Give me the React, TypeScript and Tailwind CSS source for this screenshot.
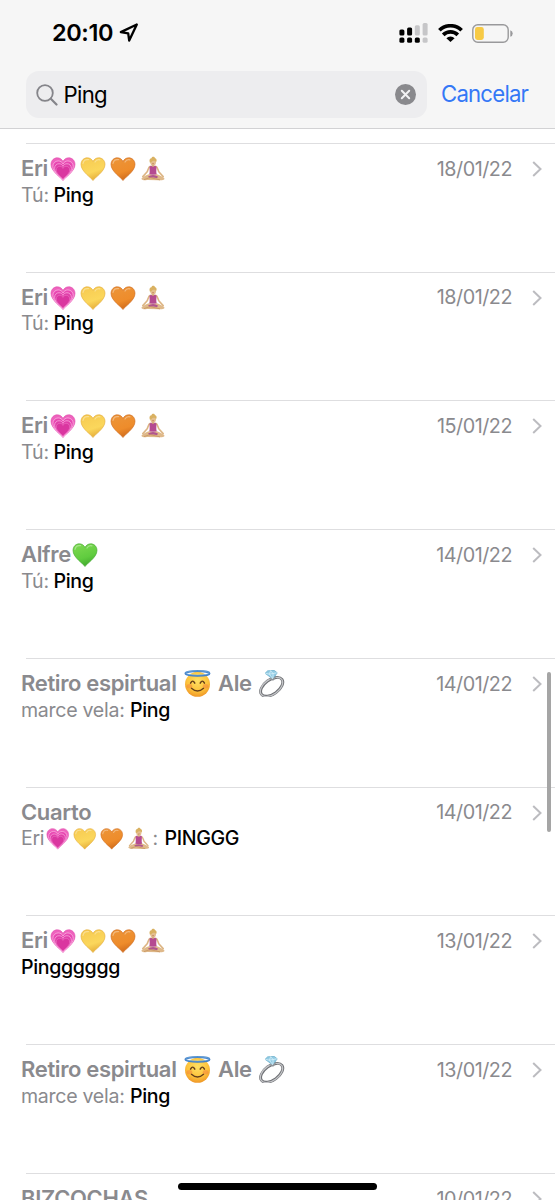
import React, { useId } from 'react';

type EmojiProps = { className: string };

const HEART = 'M13 24.5C11.9 22.2 1 15.6 1 8.5C1 4.4 3.9 1.8 7.3 1.8C9.9 1.8 12 3.3 13 5.5C14 3.3 16.1 1.8 18.7 1.8C22.1 1.8 25 4.4 25 8.5C25 15.6 14.1 22.2 13 24.5Z';

function Heart({ className, light, main, dark }: EmojiProps & { light: string; main: string; dark: string }) {
  const id = useId();
  return (
    <svg viewBox="0 0 26 26" className={className}>
      <defs>
        <linearGradient id={id} x1="0.3" y1="0" x2="0.65" y2="1">
          <stop offset="0" stopColor={light} />
          <stop offset="0.6" stopColor={main} />
          <stop offset="1" stopColor={dark} />
        </linearGradient>
      </defs>
      <path d={HEART} fill={`url(#${id})`} stroke={dark} strokeWidth="0.6" />
      <path d="M3 7.5C3.6 4.5 6 3.2 8.5 3.7M15 6C16.2 3.8 18 3.3 20 3.8" fill="none" stroke="#fff" strokeOpacity="0.35" strokeWidth="1.2" strokeLinecap="round" />
    </svg>
  );
}

function GrowingHeart({ className }: EmojiProps) {
  return (
    <svg viewBox="0 0 26 26" className={className}>
      <path d={HEART} fill="#ee62bd" stroke="#e04bad" strokeWidth="0.6" />
      <path d={HEART} transform="translate(2 3.4) scale(.85)" fill="#e848b2" stroke="#fbb4e2" strokeWidth=".9" />
      <path d={HEART} transform="translate(3.9 6.5) scale(.7)" fill="#e03fa9" stroke="#fbb4e2" strokeWidth="1" />
      <path d={HEART} transform="translate(5.7 9.3) scale(.56)" fill="#da36a0" stroke="#ee7cc8" strokeWidth="1" />
    </svg>
  );
}

const YellowHeart = (p: EmojiProps) => <Heart {...p} light="#f7cb52" main="#fbd75c" dark="#e3a936" />;
const OrangeHeart = (p: EmojiProps) => <Heart {...p} light="#ec9438" main="#ee8c2b" dark="#cc6719" />;
const GreenHeart = (p: EmojiProps) => <Heart {...p} light="#7bd84f" main="#60cc3f" dark="#3ea52b" />;

function Yogi({ className }: EmojiProps) {
  return (
    <svg viewBox="0 0 26 26" className={className}>
      <path d="M10.3 10.4C8.4 10.8 8.2 13.4 7.2 15.8L2.8 20.6M15.7 10.4C17.6 10.8 17.8 13.4 18.8 15.8L23.2 20.6" fill="none" stroke="#dcb584" strokeWidth="1.6" strokeLinecap="round" strokeLinejoin="round" />
      <path d="M11.8 7.5h2.4v4h-2.4z" fill="#d2a675" />
      <path d="M9.6 10.4C10.6 10 11.2 9.8 11.4 9.5C12 11.4 14 11.4 14.6 9.5C15 9.8 15.6 10 16.4 10.4C16.8 13 15.7 14.8 16.8 18.8H9.2C10.3 14.8 9.2 13 9.6 10.4Z" fill="#b54a91" />
      <path d="M9 18.2C6 19 3.2 20.8 1.6 22.2C.8 23.6 3.8 24.6 8 24.1L18.3 24.3C22.6 24.6 25.2 23.6 24.3 22.2C22.4 20.6 19.5 19 17 18.2C14.5 19.1 11.5 19.1 9 18.2Z" fill="#dfb98a" />
      <path d="M8 20.6Q13 17.6 18 20.6L17 22.2Q13 20.6 9.6 22.2Z" fill="#b0558f" />
      <path d="M4 23.6L10 21.6L20 23.9" fill="none" stroke="#c99763" strokeWidth=".9" />
      <ellipse cx="13.1" cy="6" rx="2.9" ry="3.6" fill="#e4bf8e" />
      <path d="M9.8 6.6C8.9 3.6 10.2 2.1 11.5 2.2C11.8 .4 14.6 .2 14.9 2C16.9 2.7 17 4.7 16.1 6C15.4 4.9 14.6 4.6 13.4 4.7C11.9 4.8 11.4 6.8 9.8 6.6Z" fill="#d9b161" />
      <path d="M12.2 7.7Q13 8.2 13.9 7.6" fill="none" stroke="#a85542" strokeWidth=".6" />
    </svg>
  );
}

function Halo({ className }: EmojiProps) {
  const id = useId();
  return (
    <svg viewBox="0 0 26 26" className={className}>
      <defs>
        <radialGradient id={id} cx=".5" cy=".35" r=".65">
          <stop offset="0" stopColor="#ffe063" />
          <stop offset=".65" stopColor="#fdc33c" />
          <stop offset="1" stopColor="#ef9727" />
        </radialGradient>
      </defs>
      <circle cx="13" cy="13.8" r="12" fill={`url(#${id})`} />
      <ellipse cx="13" cy="3.3" rx="11.6" ry="2.3" fill="none" stroke="#427fc6" strokeWidth="1.8" />
      <ellipse cx="13" cy="2.8" rx="11.4" ry="2" fill="none" stroke="#8bc5ee" strokeWidth=".5" />
      <path d="M6.3 12.7Q8.3 8.7 10.4 12.7M15.6 12.7Q17.7 8.7 19.7 12.7" fill="none" stroke="#67401b" strokeWidth="1.4" strokeLinecap="round" />
      <path d="M7.2 17.6Q13 22.9 18.8 17.6" fill="none" stroke="#67401b" strokeWidth="1.4" strokeLinecap="round" />
      <ellipse cx="5.2" cy="15.6" rx="2.8" ry="2" fill="#f27a3c" opacity=".45" />
      <ellipse cx="20.8" cy="15.6" rx="2.8" ry="2" fill="#f27a3c" opacity=".45" />
    </svg>
  );
}

function Ring({ className }: EmojiProps) {
  return (
    <svg viewBox="0 0 26 26" className={className}>
      <ellipse cx="13.2" cy="16.2" rx="12.2" ry="6.9" transform="rotate(-36 13.2 16.2)" fill="none" stroke="#6f7175" strokeWidth="2.8" />
      <ellipse cx="13" cy="16.3" rx="12.2" ry="7.2" transform="rotate(-36 13 16.3)" fill="none" stroke="#c4c5c8" strokeWidth="1.2" />
      <path d="M6.8 3.2L9.3 .8L15.7 .4L18.5 2.7L14.4 8.7Z" fill="#93cce4" stroke="#64abc9" strokeWidth=".7" />
      <path d="M7 3.2L11 4L18.3 2.7M11 4L14.4 8.7L14.5 3.4L12.2.6L11 4" fill="none" stroke="#e6f8ff" strokeWidth=".6" />
      <path d="M10.6 8L14.4 9.5L16.8 6.8" fill="none" stroke="#8e9297" strokeWidth="1.3" />
    </svg>
  );
}

function EriEmojis({ small = false }: { small?: boolean }) {
  const size = small ? 'size-[23.5px] shrink-0' : 'size-[26px] shrink-0';
  return (
    <span className={small ? 'ml-[2px] flex gap-[3.5px]' : 'ml-[2.3px] flex gap-[4px] pt-px'}>
      <GrowingHeart className={size} />
      <YellowHeart className={size} />
      <OrangeHeart className={size} />
      <Yogi className={size} />
    </span>
  );
}

function EriName() {
  return (
    <>
      <span className="w-[26.5px]">Eri</span>
      <EriEmojis />
    </>
  );
}

function RetiroName() {
  return (
    <>
      <span className="w-[163px]">Retiro espirtual</span>
      <Halo className="size-[27px] shrink-0" />
      <span className="ml-[7px] w-[33px]">Ale</span>
      <Ring className="ml-[7px] size-[27px] shrink-0" />
    </>
  );
}

type Result = { name: React.ReactNode; sender?: React.ReactNode; text: string; date: string };

const tu = <span className="w-[32.5px] tracking-[-0.2px]">Tú:</span>;
const marce = <span className="w-[109px] tracking-[-0.3px]">marce vela:</span>;

const results: Result[] = [
  { name: <EriName />, sender: tu, text: 'Ping', date: '18/01/22' },
  { name: <EriName />, sender: tu, text: 'Ping', date: '18/01/22' },
  { name: <EriName />, sender: tu, text: 'Ping', date: '15/01/22' },
  {
    name: (
      <>
        <span className="w-[49px]">Alfre</span>
        <GreenHeart className="ml-[2.3px] size-[26px] shrink-0" />
      </>
    ),
    sender: tu,
    text: 'Ping',
    date: '14/01/22',
  },
  { name: <RetiroName />, sender: marce, text: 'Ping', date: '14/01/22' },
  {
    name: 'Cuarto',
    sender: (
      <>
        <span className="w-[23px] tracking-[-0.3px]">Eri</span>
        <EriEmojis small />
        <span className="ml-[2px] w-[12px]">:</span>
      </>
    ),
    text: 'PINGGG',
    date: '14/01/22',
  },
  { name: <EriName />, text: 'Pingggggg', date: '13/01/22' },
  { name: <RetiroName />, sender: marce, text: 'Ping', date: '13/01/22' },
  { name: 'BIZCOCHAS', text: '', date: '10/01/22' },
];

function Row({ name, sender, text, date }: Result) {
  return (
    <li className="h-[128.75px] shrink-0">
      <div className="ml-[26px] h-px bg-[#dedee0]" />
      <div className="flex justify-between pt-[10px] pl-[21px] pr-[13px]">
        <div>
          <div className="flex h-[29px] items-center whitespace-nowrap text-[22px] font-semibold tracking-[-0.35px] text-[#8a8a8e]">{name}</div>
          <div className="flex h-[25px] items-center whitespace-nowrap text-[19.6px] text-[#8a8a8e]">
            {sender}
            <span className="font-medium tracking-[-0.35px] text-black">{text}</span>
          </div>
        </div>
        <div className="flex h-[30px] items-center">
          <span className="pt-px text-[19.8px] tracking-[-0.5px] text-[#8a8a8e]">{date}</span>
          <svg viewBox="0 0 10 16" className="ml-[20px] h-[16px] w-[10px]" fill="none" stroke="#bcbcc0" strokeWidth="2">
            <path d="M1.2 1L8.5 8L1.2 15" />
          </svg>
        </div>
      </div>
    </li>
  );
}

function StatusBar() {
  return (
    <div className="flex h-[66px] items-center justify-between pl-[52px] pr-[42px]">
      <div className="flex items-center">
        <span className="w-[65px] text-[23.5px] font-semibold tracking-[-0.4px] text-black">20:10</span>
        <svg viewBox="0 0 20 20" className="ml-[2px] size-[20px]" fill="none" stroke="#000" strokeWidth="2.3" strokeLinejoin="round">
          <path d="M17.8 1.5L1.8 9.1L9.2 10.4L10.2 17.6Z" />
        </svg>
      </div>
      <div className="flex items-center">
        <svg viewBox="0 0 29 20" className="h-[20px] w-[29px]">
          <g fill="#000">
            <rect x="0.4" y="6.5" width="5" height="6" rx="1.5" />
            <rect x="8.1" y="4.5" width="5" height="8" rx="1.5" />
            <rect x="0.4" y="14.5" width="5" height="5.3" rx="1.6" />
            <rect x="8.1" y="14.5" width="5" height="5.3" rx="1.6" />
            <rect x="15.8" y="14.5" width="5" height="5.3" rx="1.6" />
          </g>
          <g fill="#c6c6c8">
            <rect x="15.8" y="2.3" width="5" height="10.2" rx="1.5" />
            <rect x="23.6" y="0" width="5" height="12.5" rx="1.5" />
            <rect x="23.6" y="14.5" width="5" height="5.3" rx="1.6" />
          </g>
        </svg>
        <svg viewBox="0 0 25 18" className="ml-[9.5px] h-[18px] w-[25px]" fill="none" stroke="#000" strokeWidth="3.7">
          <path d="M1.4 6.3A15.8 15.8 0 0 1 23.6 6.3M5.2 10.9A10.4 10.4 0 0 1 19.8 10.9" />
          <path d="M12.5 18L8.4 14.2A5.8 5.8 0 0 1 16.6 14.2Z" fill="#000" stroke="none" />
        </svg>
        <svg viewBox="0 0 41 19" className="ml-[9.5px] h-[19px] w-[41px]">
          <rect x=".8" y=".8" width="35.4" height="17.4" rx="5" fill="none" stroke="#99999b" strokeWidth="1.4" />
          <rect x="3" y="3" width="8.8" height="13" rx="2.4" fill="#f7ca45" />
          <path d="M38.3 6.3Q40.7 7 40.7 9.5T38.3 12.7Z" fill="#99999b" />
        </svg>
      </div>
    </div>
  );
}

function SearchBar() {
  return (
    <div className="flex items-start pt-[5px] pl-[26px]">
      <div className="flex h-[47px] w-[401px] items-center rounded-[13px] bg-[#ededef] pl-[10px] pr-[11px]">
        <svg viewBox="0 0 22 22" className="size-[22px]" fill="none" stroke="#85858a" strokeWidth="1.8" strokeLinecap="round">
          <circle cx="9" cy="9" r="7.8" />
          <path d="M14.8 14.8L20.5 20.5" strokeWidth="2.2" />
        </svg>
        <span className="ml-[5.5px] grow text-[22.2px] tracking-[-0.7px] text-black">Ping</span>
        <svg viewBox="0 0 21 21" className="size-[21px]">
          <circle cx="10.5" cy="10.5" r="10.5" fill="#89898d" />
          <path d="M6.8 6.8L14.2 14.2M14.2 6.8L6.8 14.2" stroke="#f2f2f4" strokeWidth="2" strokeLinecap="round" />
        </svg>
      </div>
      <span className="ml-[14px] flex h-[46px] items-center text-[22.2px] tracking-[-0.8px] text-[#3478f6]">Cancelar</span>
    </div>
  );
}

export default function App() {
  return (
    <main className="relative flex h-[1200px] w-[555px] flex-col overflow-hidden bg-white font-['Inter','Liberation_Sans',sans-serif]">
      <header className="h-[129px] shrink-0 border-b border-[#d2d2d4] bg-[#f6f6f6]">
        <StatusBar />
        <SearchBar />
      </header>
      <ul className="flex flex-col pt-[13.9px]">
        {results.map((r, i) => (
          <Row key={i} {...r} />
        ))}
      </ul>
      <div className="absolute top-[672px] right-[4px] h-[160px] w-[4px] rounded-full bg-[#a5a5a5]" />
      <div className="absolute bottom-[10px] left-[178px] h-[7px] w-[199px] rounded-full bg-black" />
    </main>
  );
}
